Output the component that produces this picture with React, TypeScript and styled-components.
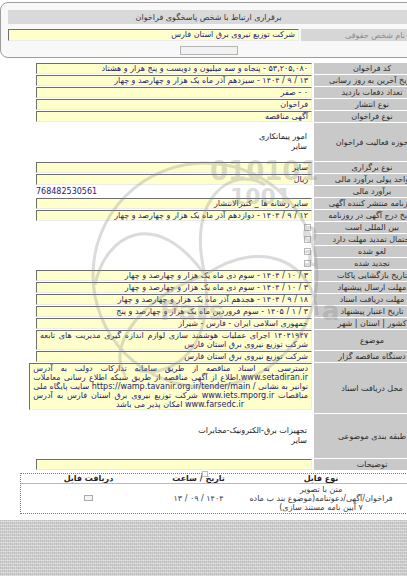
import React from "react";
import styled, { createGlobalStyle } from "styled-components";

const GlobalStyle = createGlobalStyle`
  html, body { margin: 0; padding: 0; background: #fff; overflow: hidden; }
  body { width: 407px; height: 576px; font-family: "DejaVu Sans", "Noto Sans", sans-serif; }
  #root { width: 407px; height: 576px; overflow: hidden; }
`;

const Page = styled.div`
  position: relative;
  width: 430px;
  height: 576px;
  display: flex;
  flex-direction: column;
`;

const Panel = styled.section`
  margin-top: 2px;
  width: 420px;
  height: 56px;
  box-sizing: border-box;
  border: 1px solid #9c9c9c;
  border-radius: 8px;
  background: #f8f8f8;
  padding: 7px 0 0 7px;
  display: flex;
  flex-direction: column;
`;

const HeaderBar = styled.div`
  height: 14px;
  background: #d9d9d9;
  color: #333;
  font-size: 8px;
  display: flex;
  align-items: center;
  justify-content: center;
  padding-right: 10px;
  direction: rtl;
`;

const PanelRow = styled.div`
  margin-top: 5px;
  height: 12px;
  display: flex;
  direction: rtl;
  gap: 2px;
`;

const PanelLabel = styled.div`
  flex: 0 0 88px;
  padding-left: 30px;
  background: #d6d6d6;
  color: #8a8a8a;
  font-size: 8px;
  display: flex;
  align-items: center;
  justify-content: center;
`;

const SmallBox = styled.div`
  margin: 5px 0 0 172px;
  width: 58px;
  height: 9px;
  box-sizing: border-box;
  border: 1px solid #b4b4b4;
  background: #f2f2f2;
`;

const Table = styled.div`
  margin-top: 5px;
  padding-left: 35px;
  display: flex;
  flex-direction: column;
  gap: 1px;
`;

const Row = styled.div<{ $h?: number }>`
  display: flex;
  direction: rtl;
  gap: 2px;
  min-height: ${(p) => p.$h ?? 11}px;
`;

const Label = styled.div`
  flex: 0 0 116px;
  background: #c9c9c9;
  color: #2b2b2b;
  font-size: 8px;
  display: flex;
  align-items: center;
  justify-content: center;
  white-space: nowrap;
`;

const Cell = styled.div<{ $top?: boolean }>`
  flex: 0 0 276px;
  display: flex;
  flex-direction: column;
  justify-content: ${(p) => (p.$top ? "flex-start" : "center")};
`;

const Field = styled.div`
  box-sizing: border-box;
  min-height: 11px;
  background: #ffffcc;
  border-top: 1px solid #6e6e6e;
  border-left: 1px solid #6e6e6e;
  border-right: 1px solid #ececec;
  border-bottom: 1px solid #ececec;
  padding: 0 3px;
  color: #23236e;
  font-size: 8px;
  line-height: 9px;
  text-align: right;
  white-space: nowrap;
  overflow: hidden;
  direction: rtl;
`;

const WideField = styled(Field)`
  flex: 1;
`;

const Line = styled.div<{ $full?: boolean; $pr?: number }>`
  direction: rtl;
  text-align: ${(p) => (p.$full ? "justify" : "right")};
  text-align-last: ${(p) => (p.$full ? "justify" : "right")};
  padding-right: ${(p) => p.$pr ?? 0}px;
  white-space: nowrap;
`;

const Plain = styled.div`
  padding-right: 5px;
  color: #222;
  font-size: 8px;
  line-height: 10px;
  text-align: right;
`;

const Amount = styled.div`
  direction: ltr;
  text-align: left;
  color: #23236e;
  font-size: 8px;
  line-height: 11px;
`;

const Check = styled.span`
  align-self: flex-start;
  width: 5px;
  height: 5px;
  margin-right: 1px;
  border: 1px solid #b8b8b8;
  background: #fff;
`;

const Files = styled.div`
  margin: 3px 0 0 20px;
  width: 410px;
  border: 1px dotted #7c7c7c;
  direction: rtl;
  font-size: 8px;
  position: relative;
`;

const FileGrid = styled.div<{ $head?: boolean }>`
  display: grid;
  grid-template-columns: 30px 160px 85px 1fr;
  align-items: center;
  text-align: center;
  color: ${(p) => (p.$head ? "#1e1e1e" : "#3a3a3a")};
  font-weight: ${(p) => (p.$head ? 700 : 400)};
  line-height: 9px;
  padding: ${(p) => (p.$head ? "0" : "1px 0 1px")};
  border-bottom: ${(p) => (p.$head ? "1px solid #b9b9b9" : "none")};
`;

const Marker = styled.span`
  position: absolute;
  top: -3px;
  left: 181px;
  width: 4px;
  height: 4px;
  border: 1px solid #bbb;
  background: #fff;
`;

const FileIcon = styled.span`
  display: inline-block;
  width: 7px;
  height: 4px;
  border: 1px solid #aaa;
  background: #f4f4f4;
`;

const Texture = styled.div`
  margin-top: auto;
  height: 56px;
  width: 407px;
  background-color: #cdcdcd;
  background-image:
    repeating-linear-gradient(0deg, rgba(255,255,255,0.35) 0 1px, transparent 1px 3px),
    repeating-linear-gradient(90deg, rgba(0,0,0,0.07) 0 1px, transparent 1px 2px),
    repeating-linear-gradient(45deg, rgba(255,255,255,0.12) 0 1px, transparent 1px 4px);
`;

const Watermark = styled.svg`
  position: absolute;
  left: 70px;
  top: 150px;
  width: 280px;
  height: 250px;
  opacity: 0.3;
  pointer-events: none;
`;

const rows1: [string, string][] = [
  ["کد فراخوان", "۵۳,۲۰۵,۰۸۰ - پنجاه و سه میلیون و دویست و پنج هزار و هشتاد"],
  ["تاریخ آخرین به روز رسانی", "۱۳ / ۹ / ۱۴۰۴ - سیزدهم آذر ماه یک هزار و چهارصد و چهار"],
  ["تعداد دفعات بازدید", "۰ - صفر"],
  ["نوع انتشار", "فراخوان"],
  ["نوع فراخوان", "آگهی مناقصه"],
];

const checks = ["بین المللی است", "احتمال تمدید مهلت دارد", "لغو شده", "تجدید شده"];

const dates: [string, string][] = [
  ["تاریخ بازگشایی پاکات", "۳ / ۱۰ / ۱۴۰۴ - سوم دی ماه یک هزار و چهارصد و چهار"],
  ["مهلت ارسال پیشنهاد", "۳ / ۱۰ / ۱۴۰۴ - سوم دی ماه یک هزار و چهارصد و چهار"],
  ["مهلت دریافت اسناد", "۱۸ / ۹ / ۱۴۰۴ - هجدهم آذر ماه یک هزار و چهارصد و چهار"],
  ["تاریخ اعتبار پیشنهاد", "۳ / ۱ / ۱۴۰۵ - سوم فروردین ماه یک هزار و چهارصد و پنج"],
  ["کشور | استان | شهر", "جمهوری اسلامی ایران - فارس - شیراز"],
];

function FieldRow({ label, value }: { label: string; value: string }) {
  return (
    <Row>
      <Label>{label}</Label>
      <Cell>
        <Field>{value}</Field>
      </Cell>
    </Row>
  );
}

export default function App() {
  return (
    <>
      <GlobalStyle />
      <Page>
        <Panel>
          <HeaderBar>برقراری ارتباط با شخص پاسخگوی فراخوان</HeaderBar>
          <PanelRow>
            <PanelLabel>نام شخص حقوقی</PanelLabel>
            <WideField>شرکت توزیع نیروی برق استان فارس</WideField>
          </PanelRow>
          <SmallBox />
        </Panel>

        <Table>
          {rows1.map(([l, v]) => (
            <FieldRow key={l} label={l} value={v} />
          ))}
          <Row $h={38}>
            <Label>حوزه فعالیت فراخوان</Label>
            <Cell>
              <Plain>
                امور پیمانکاری
                <br />
                سایر
              </Plain>
            </Cell>
          </Row>
          <FieldRow label="نوع برگزاری" value="سایر" />
          <FieldRow label="واحد پولی برآورد مالی" value="ریال" />
          <Row>
            <Label>برآورد مالی</Label>
            <Cell>
              <Amount>768482530561</Amount>
            </Cell>
          </Row>
          <FieldRow label="روزنامه منتشر کننده آگهی" value="سایر رسانه ها _ کثیرالانتشار" />
          <FieldRow label="تاریخ درج آگهی در روزنامه" value="۱۲ / ۹ / ۱۴۰۴ - دوازدهم آذر ماه یک هزار و چهارصد و چهار" />
          {checks.map((c) => (
            <Row key={c}>
              <Label>{c}</Label>
              <Cell>
                <Check />
              </Cell>
            </Row>
          ))}
          {dates.map(([l, v]) => (
            <FieldRow key={l} label={l} value={v} />
          ))}
          <Row>
            <Label>موضوع</Label>
            <Cell>
              <Field>
                <Line $full>۱۴۰۴۱۹۴۷ اجرای عملیات هوشمند سازی لوازم اندازه گیری مدیریت های تابعه</Line>
                <Line>شرکت توزیع نیروی برق استان فارس</Line>
              </Field>
            </Cell>
          </Row>
          <FieldRow label="دستگاه مناقصه گزار" value="شرکت توزیع نیروی برق استان فارس" />
          <Row $h={50}>
            <Label>محل دریافت اسناد</Label>
            <Cell $top>
              <Field>
                <Line $full>دسترسی به اسناد مناقصه از طریق سامانه تدارکات دولت به آدرس</Line>
                <Line $full>www.setadiran.ir.اطلاع از آگهی مناقصه از طریق شبکه اطلاع رسانی معاملات</Line>
                <Line $full>توانیر به نشانی / https://wamp.tavanir.org.ir/tender/main سایت پایگاه ملی</Line>
                <Line $full>مناقصات www.iets.mporg.ir شرکت توزیع نیروی برق استان فارس به آدرس</Line>
                <Line $pr={64}>www.farsedc.ir امکان پذیر می باشد</Line>
              </Field>
            </Cell>
          </Row>
          <Row $h={44}>
            <Label>طبقه بندی موضوعی</Label>
            <Cell>
              <Plain>
                تجهیزات برق-الکترونیک-مخابرات
                <br />
                سایر
              </Plain>
            </Cell>
          </Row>
          <FieldRow label="توضیحات" value="" />
        </Table>

        <Files>
          <Marker />
          <FileGrid $head>
            <span>#</span>
            <span>نوع فایل</span>
            <span>تاریخ / ساعت</span>
            <span>دریافت فایل</span>
          </FileGrid>
          <FileGrid>
            <span>1</span>
            <span>
              متن با تصویر
              <br />
              فراخوان/آگهی/دعوتنامه(موضوع بند ب ماده
              <br />
              ۷ آیین نامه مستند سازی)
            </span>
            <span>۱۴۰۴ / ۰۹ / ۱۳</span>
            <span>
              <FileIcon />
            </span>
          </FileGrid>
        </Files>

        <Texture />

        <Watermark viewBox="0 0 280 250">
          <g fill="none" stroke="#8a8a8a" strokeWidth="3">
            <circle cx="135" cy="125" r="112" />
            <path d="M135 125 C 85 55, 35 85, 25 135" />
            <path d="M135 125 C 115 45, 165 15, 195 35" />
            <path d="M135 125 C 195 85, 245 115, 247 165" />
            <path d="M135 125 C 145 195, 105 230, 65 220" />
            <path d="M135 125 C 75 145, 35 195, 55 225" />
          </g>
          <g fill="#8a8a8a" fontFamily="DejaVu Sans, sans-serif" fontWeight="700">
            <text x="140" y="30" fontSize="26">010101</text>
            <text x="160" y="54" fontSize="22">1001</text>
            <text x="232" y="92" fontSize="22">0</text>
            <text x="232" y="116" fontSize="22">1</text>
            <text x="90" y="170" fontSize="26">Pars</text>
            <text x="252" y="170" fontSize="26">a</text>
          </g>
          <text x="275" y="210" fontSize="14" fill="#8a8a8a" textAnchor="end" direction="rtl" fontFamily="DejaVu Sans, sans-serif">
            پایگاه ملی اطلاع رسانی مناقصات
          </text>
        </Watermark>
      </Page>
    </>
  );
}
